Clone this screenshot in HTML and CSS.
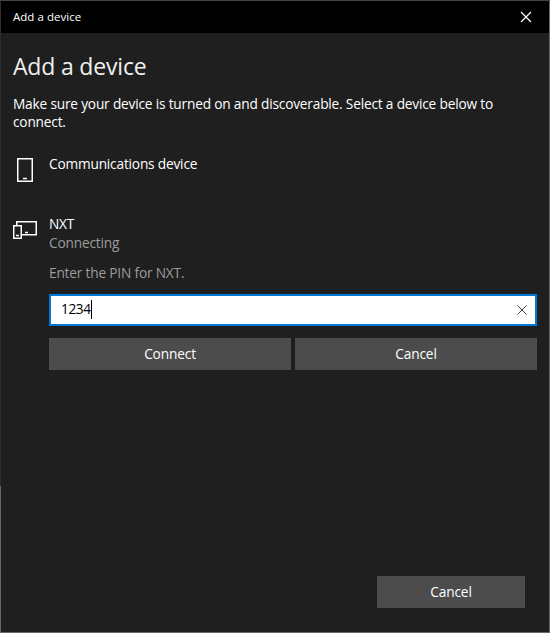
FILE: index.html
```html
<!DOCTYPE html>
<html lang="en">
<head>
<meta charset="utf-8">
<title>Add a device</title>
<link rel="stylesheet" href="styles.css">
</head>
<body>
<div class="window">
  <header class="titlebar">
    <span class="caption">Add a device</span>
    <button class="close" aria-label="Close"><svg width="10" height="10" viewBox="0 0 10 10"><path d="M0 0L10 10M10 0L0 10"/></svg></button>
  </header>
  <main class="content">
    <h1>Add a device</h1>
    <p class="intro">Make sure your device is turned on and discoverable. Select a device below to<br>connect.</p>
    <section class="device phone">
      <svg class="icon" width="24" height="26" viewBox="0 0 24 26"><rect x="4.75" y="1.75" width="14.5" height="22.5"/><path d="M10 21.5H14"/></svg>
      <div class="name">Communications device</div>
    </section>
    <section class="device nxt">
      <svg class="icon" width="24" height="20" viewBox="0 0 24 20"><path d="M3.75 5V1.75H23.25V14.75H9"/><rect x=".75" y="5.75" width="7.5" height="12.5"/><path d="M3 15.5H6M12 12.5H15"/></svg>
      <div class="details">
        <div class="name">NXT</div>
        <div class="status">Connecting</div>
        <label class="prompt" for="pin">Enter the PIN for NXT.</label>
        <div class="field" id="pin"><span class="value">1234</span><span class="caret"></span><svg class="clear" width="10" height="10" viewBox="0 0 10 10"><path d="M.5 .5L9.5 9.5M9.5 .5L.5 9.5"/></svg></div>
        <div class="actions"><button>Connect</button><button>Cancel</button></div>
      </div>
    </section>
    <footer><button>Cancel</button></footer>
  </main>
</div>
</body>
</html>
```
FILE: styles.css
```css
* { box-sizing: border-box; }
body { margin: 0; background: #1f1f1f; }
.window {
  width: 550px; height: 633px;
  display: flex; flex-direction: column;
  padding: 1px;
  background:
    linear-gradient(#444, #444) top / 100% 1px no-repeat,
    linear-gradient(#666, #666) bottom / 100% 1px no-repeat,
    linear-gradient(#666, #666) right / 1px 100% no-repeat,
    linear-gradient(#2d2d2d 486px, #666 486px) left / 1px 100% no-repeat,
    #1f1f1f;
  color: #fff;
  font: 13.7px/18px "Open Sans", "Noto Sans", sans-serif;
  letter-spacing: -0.19px;
}
.titlebar {
  height: 32px; flex: none; background: #000;
  display: flex; align-items: center; justify-content: space-between;
  padding-left: 12px;
}
.caption { font-size: 11.5px; letter-spacing: 0.03px; }
button { border: 0; padding: 0; font: inherit; letter-spacing: -0.15px; color: inherit; background: #4c4c4c; height: 32px; }
.close { background: none; width: 46px; display: flex; align-items: center; justify-content: center; }
.close svg { stroke: #fff; stroke-width: 1.2; fill: none; overflow: visible; }
.content { flex: 1; display: flex; flex-direction: column; padding: 17px 12px 24px; }
h1 { margin: 0; font-weight: 400; font-size: 23px; letter-spacing: -0.18px; line-height: 32px; color: #f0f0f0; }
.intro { margin: 13px 0 0; white-space: nowrap; }
.device { display: flex; gap: 12px; }
.icon { flex: none; fill: none; stroke: #fff; stroke-width: 1.5; }
.phone { margin-top: 24px; height: 60px; }
.phone .icon { margin-top: 2px; }
.nxt .icon { margin-top: 5px; }
.name { height: 19px; }
.details { width: 488px; }
.status, .prompt { color: #9c9c9c; }
.prompt { display: block; margin-top: 12px; }
.field {
  margin-top: 12px; height: 32px; border: 2px solid #0078d7; background: #fff; color: #000;
  display: flex; align-items: center; padding: 0 8px 0 10px;
}
.value { letter-spacing: -0.4px; margin-top: -2px; }
.caret { width: 1px; height: 19px; margin-top: -2px; background: #000; }
.clear { margin-left: auto; stroke: #444; stroke-width: 1; }
.actions { margin-top: 12px; display: grid; grid-template-columns: 1fr 1fr; gap: 4px; }
footer { margin-top: auto; padding-right: 12px; display: flex; justify-content: flex-end; }
footer button { width: 148px; }
```
